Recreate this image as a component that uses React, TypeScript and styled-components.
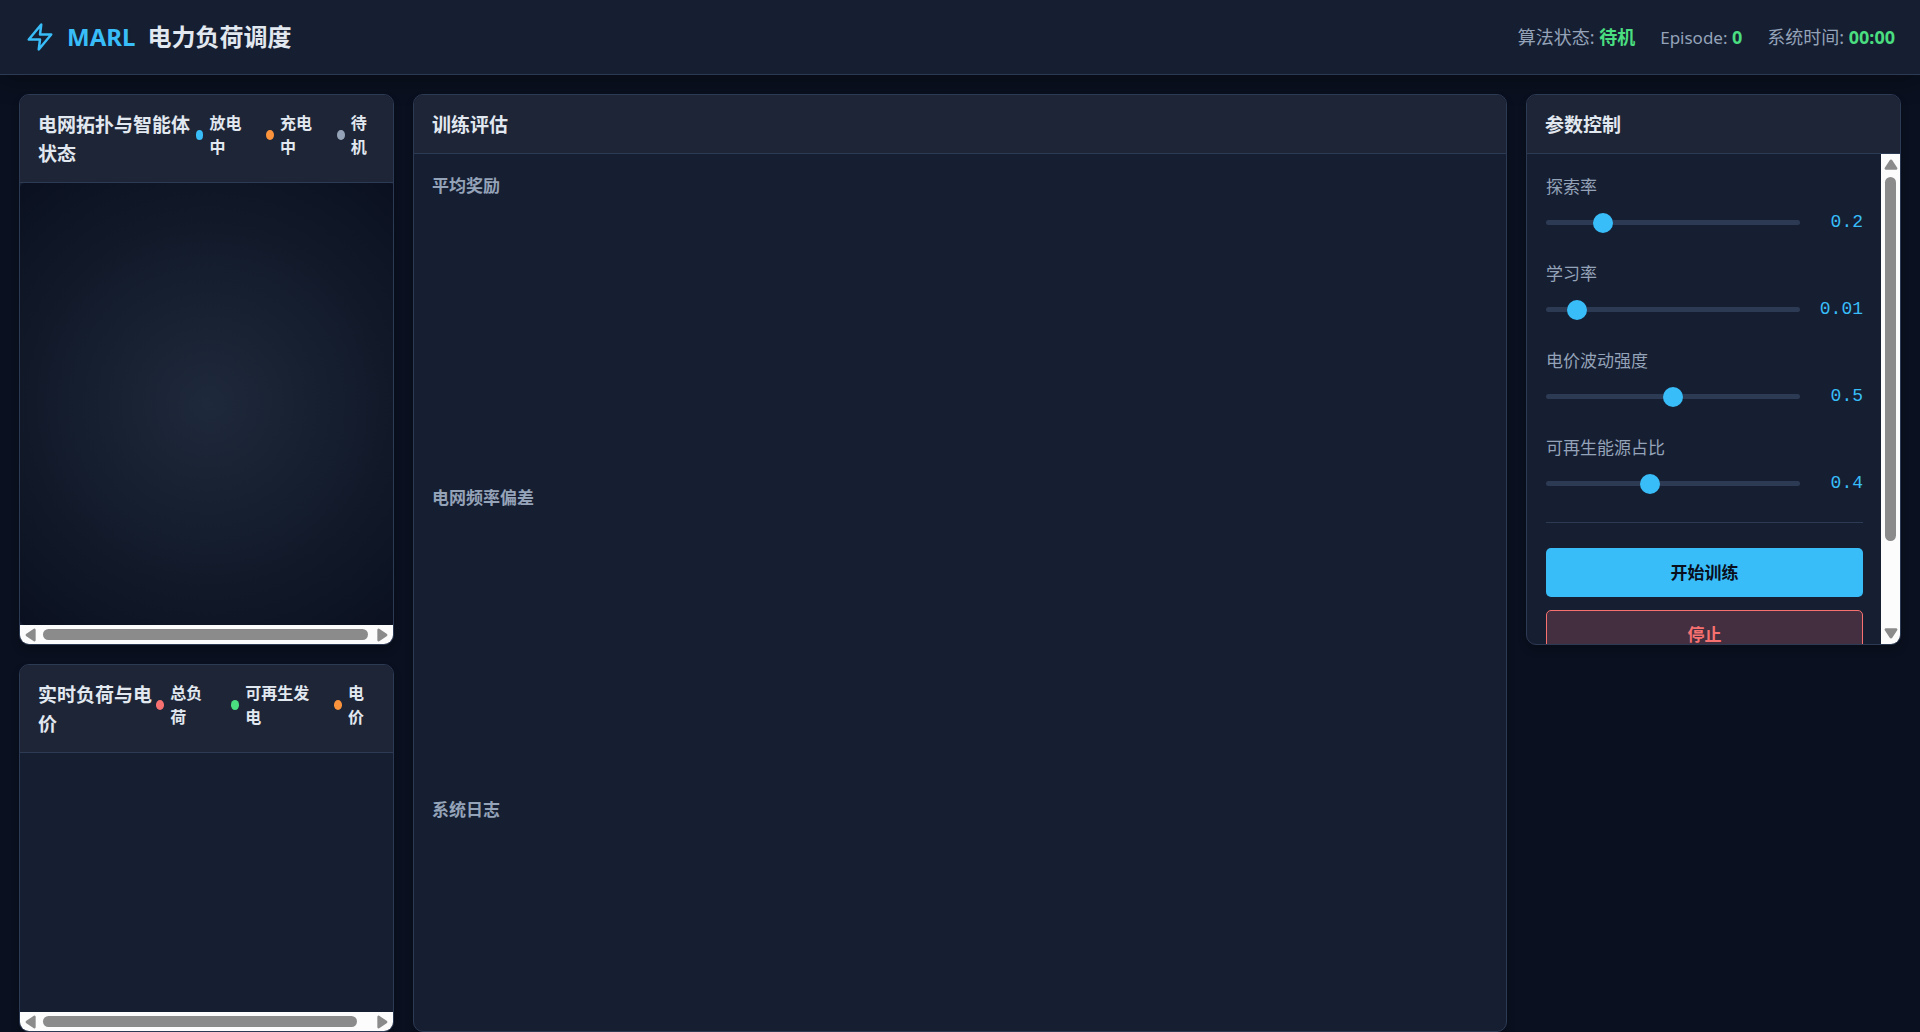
import React, { useEffect, useRef, useState } from 'react';
import styled, { createGlobalStyle } from 'styled-components';

const c = {
  bg: '#0a101f',
  panel: '#161e32',
  head: '#1d2536',
  border: '#2d3a54',
  text: '#e2e8f0',
  muted: '#94a3b8',
  accent: '#38bdf8',
  green: '#4ade80',
  orange: '#fb923c',
  red: '#f87171',
};

const GlobalStyle = createGlobalStyle`
  * { box-sizing: border-box; }
  body {
    margin: 0;
    background: ${c.bg};
    color: ${c.text};
    font-family: "Noto Sans", "Noto Sans CJK SC", sans-serif;
    font-size: 16px;
    line-height: 24px;
  }
  h1, h2, h3 { margin: 0; }
`;

const Page = styled.div`
  display: flex;
  flex-direction: column;
  height: 100vh;
  overflow: hidden;
`;

const Header = styled.header`
  display: flex;
  align-items: center;
  justify-content: space-between;
  padding: 19px 25px;
  background: ${c.panel};
  border-bottom: 1px solid ${c.border};
  box-shadow: 0 5px 25px rgba(0, 0, 0, 0.3);
`;

const Brand = styled.div`
  display: flex;
  align-items: center;
  gap: 12px;
`;

const Title = styled.h1`
  display: flex;
  gap: 12px;
  font-size: 24px;
  line-height: 36px;
  font-weight: 700;
`;

const Accent = styled.span`
  color: ${c.accent};
`;

const StatusList = styled.div`
  display: flex;
  gap: 25px;
  line-height: 28px;
  color: ${c.muted};
`;

const Status = styled.span<{ $compact?: boolean }>`
  font-size: ${(p) => (p.$compact ? 17 : 18)}px;
`;

const StatusValue = styled.strong`
  font-size: 18px;
  color: ${c.green};
`;

const Main = styled.main`
  flex: 1;
  min-height: 0;
  display: grid;
  grid-template-columns: 375px minmax(0, 1fr) 375px;
  grid-template-rows: minmax(0, 3fr) minmax(0, 2fr);
  gap: 19px;
  padding: 19px 19px 0;
`;

const Panel = styled.section<{ $tall?: boolean }>`
  grid-row: ${(p) => (p.$tall ? 'span 2' : 'auto')};
  display: flex;
  flex-direction: column;
  min-width: 0;
  min-height: 0;
  overflow: hidden;
  background: ${c.panel};
  border: 1px solid ${c.border};
  border-radius: 10px;
  box-shadow: 0 5px 8px rgba(0, 0, 0, 0.2);
`;

const PanelHead = styled.div`
  display: flex;
  align-items: flex-start;
  justify-content: space-between;
  padding: 16px 18px 13px;
  background: ${c.head};
  border-bottom: 1px solid ${c.border};
`;

const PanelTitle = styled.h2`
  font-size: 19px;
  line-height: 29px;
  font-weight: 600;
`;

const Legend = styled.div`
  display: flex;
  gap: 20px;
  font-weight: 600;
`;

const LegendItem = styled.span`
  display: flex;
  align-items: center;
  gap: 6px;
`;

const Dot = styled.i<{ $color: string }>`
  width: 10px;
  height: 10px;
  border-radius: 50%;
  background: ${(p) => p.$color};
`;

const Scroller = styled.div<{ $vertical?: boolean }>`
  flex: 1;
  min-height: 0;
  display: flex;
  flex-direction: ${(p) => (p.$vertical ? 'row' : 'column')};
`;

const Viewport = styled.div`
  flex: 1;
  min-width: 0;
  min-height: 0;
  overflow: auto;
  scrollbar-width: none;
`;

const Canvas = styled.div<{ $extra: number; $glow?: boolean }>`
  width: calc(100% + ${(p) => p.$extra}px);
  height: 100%;
  border-radius: 5px;
  background: ${(p) => (p.$glow ? 'radial-gradient(circle at center, #1e293b 0%, #0a101f 100%)' : 'transparent')};
`;

const Bar = styled.div<{ $vertical?: boolean }>`
  flex: 0 0 19px;
  display: flex;
  flex-direction: ${(p) => (p.$vertical ? 'column' : 'row')};
  align-items: center;
  padding: ${(p) => (p.$vertical ? '4px 0' : '0 4px')};
  gap: 5px;
  background: #fcfcfc;
`;

const Track = styled.div<{ $vertical?: boolean }>`
  flex: 1;
  align-self: stretch;
  display: flex;
  flex-direction: ${(p) => (p.$vertical ? 'column' : 'row')};
  padding: ${(p) => (p.$vertical ? '0 4px' : '4px 0')};
`;

const Thumb = styled.div`
  border-radius: 6px;
  background: #8b8b8b;
`;

const arrows = {
  left: 'M10 1.5v9a1 1 0 0 1-1.6.8L2 7.1a1.3 1.3 0 0 1 0-2.2L8.4.7A1 1 0 0 1 10 1.5z',
  right: 'M2 1.5v9a1 1 0 0 0 1.6.8L10 7.1a1.3 1.3 0 0 0 0-2.2L3.6.7A1 1 0 0 0 2 1.5z',
  up: 'M1.5 10h9a1 1 0 0 0 .8-1.6L7.1 2a1.3 1.3 0 0 0-2.2 0L.7 8.4A1 1 0 0 0 1.5 10z',
  down: 'M1.5 2h9a1 1 0 0 1 .8 1.6L7.1 10a1.3 1.3 0 0 1-2.2 0L.7 3.6A1 1 0 0 1 1.5 2z',
};

function Arrow({ dir }: { dir: keyof typeof arrows }) {
  return (
    <svg width="14" height="14" viewBox="0 0 12 12" aria-hidden="true">
      <path d={arrows[dir]} fill="#8b8b8b" />
    </svg>
  );
}

function ScrollArea({ vertical, children }: { vertical?: boolean; children: React.ReactNode }) {
  const view = useRef<HTMLDivElement>(null);
  const [thumb, setThumb] = useState({ start: 0, size: 100 });

  const measure = () => {
    const el = view.current;
    if (!el) return;
    const total = vertical ? el.scrollHeight : el.scrollWidth;
    const shown = vertical ? el.clientHeight : el.clientWidth;
    const offset = vertical ? el.scrollTop : el.scrollLeft;
    setThumb({ start: (offset / total) * 100, size: (shown / total) * 100 });
  };

  useEffect(() => {
    measure();
    window.addEventListener('resize', measure);
    return () => window.removeEventListener('resize', measure);
  }, []);

  return (
    <Scroller $vertical={vertical}>
      <Viewport ref={view} onScroll={measure}>{children}</Viewport>
      <Bar $vertical={vertical}>
        <Arrow dir={vertical ? 'up' : 'left'} />
        <Track $vertical={vertical}>
          <div style={{ flex: `0 0 ${thumb.start}%` }} />
          <Thumb style={{ flex: `0 0 ${thumb.size}%` }} />
        </Track>
        <Arrow dir={vertical ? 'down' : 'right'} />
      </Bar>
    </Scroller>
  );
}

const Charts = styled.div`
  flex: 1;
  min-height: 0;
  overflow: hidden;
  display: grid;
  grid-auto-rows: 293px;
  gap: 19px;
  padding: 19px 18px;
`;

const ChartTitle = styled.h3`
  font-size: 17px;
  line-height: 26px;
  font-weight: 600;
  color: ${c.muted};
`;

const Form = styled.form`
  padding: 20px 18px 94px 19px;
`;

const Field = styled.div`
  display: grid;
  gap: 9px;
  margin-bottom: 25px;
`;

const FieldLabel = styled.label`
  font-size: 17px;
  line-height: 26px;
  color: ${c.muted};
`;

const FieldRow = styled.div`
  display: flex;
  align-items: center;
  gap: 13px;
`;

const Range = styled.input`
  appearance: none;
  flex: 1;
  min-width: 0;
  height: 5px;
  margin: 0;
  border-radius: 3px;
  background: ${c.border};
  &::-webkit-slider-thumb {
    appearance: none;
    width: 20px;
    height: 20px;
    border-radius: 50%;
    background: ${c.accent};
  }
`;

const Value = styled.output`
  width: 50px;
  text-align: right;
  font-family: "Liberation Mono", monospace;
  font-size: 18px;
  line-height: 27px;
  color: ${c.accent};
`;

const Actions = styled.div`
  display: grid;
  gap: 13px;
  padding-top: 25px;
  border-top: 1px solid ${c.border};
`;

const Button = styled.button<{ $danger?: boolean }>`
  height: 49px;
  border: ${(p) => (p.$danger ? `1px solid ${c.red}` : '0')};
  border-radius: 5px;
  background: ${(p) => (p.$danger ? 'rgba(248, 113, 113, 0.2)' : c.accent)};
  color: ${(p) => (p.$danger ? c.red : '#0a0f1d')};
  font-family: inherit;
  font-size: 17px;
  line-height: 26px;
  font-weight: 600;
`;

const fields = [
  { id: 'epsilon', label: '探索率', min: 0, max: 1, step: 0.01, value: 0.2 },
  { id: 'alpha', label: '学习率', min: 0.001, max: 0.1, step: 0.001, value: 0.01 },
  { id: 'volatility', label: '电价波动强度', min: 0, max: 1, step: 0.1, value: 0.5 },
  { id: 'renewable', label: '可再生能源占比', min: 0, max: 1, step: 0.1, value: 0.4 },
];

function Slider({ field }: { field: (typeof fields)[number] }) {
  const [value, setValue] = useState(field.value);
  return (
    <Field>
      <FieldLabel htmlFor={field.id}>{field.label}</FieldLabel>
      <FieldRow>
        <Range
          id={field.id}
          type="range"
          min={field.min}
          max={field.max}
          step={field.step}
          value={value}
          onChange={(e) => setValue(Number(e.target.value))}
        />
        <Value htmlFor={field.id}>{value}</Value>
      </FieldRow>
    </Field>
  );
}

function LegendList({ items }: { items: [string, string][] }) {
  return (
    <Legend>
      {items.map(([label, color]) => (
        <LegendItem key={label}>
          <Dot $color={color} />
          {label}
        </LegendItem>
      ))}
    </Legend>
  );
}

export default function App() {
  return (
    <Page>
      <GlobalStyle />
      <Header>
        <Brand>
          <svg width="30" height="30" viewBox="0 0 24 24" fill="none" stroke={c.accent} strokeWidth="2" strokeLinecap="round" strokeLinejoin="round" aria-hidden="true">
            <path d="M13 2L3 14h9l-1 8 10-12h-9l1-8z" />
          </svg>
          <Title>
            <Accent>MARL</Accent>
            <span>电力负荷调度</span>
          </Title>
        </Brand>
        <StatusList>
          <Status>算法状态: <StatusValue>待机</StatusValue></Status>
          <Status $compact>Episode: <StatusValue>0</StatusValue></Status>
          <Status>系统时间: <StatusValue>00:00</StatusValue></Status>
        </StatusList>
      </Header>
      <Main>
        <Panel>
          <PanelHead>
            <PanelTitle>电网拓扑与智能体状态</PanelTitle>
            <LegendList items={[['放电中', c.accent], ['充电中', c.orange], ['待机', c.muted]]} />
          </PanelHead>
          <ScrollArea>
            <Canvas $extra={2} $glow />
          </ScrollArea>
        </Panel>
        <Panel $tall>
          <PanelHead>
            <PanelTitle>训练评估</PanelTitle>
          </PanelHead>
          <Charts>
            <ChartTitle>平均奖励</ChartTitle>
            <ChartTitle>电网频率偏差</ChartTitle>
            <ChartTitle>系统日志</ChartTitle>
          </Charts>
        </Panel>
        <Panel>
          <PanelHead>
            <PanelTitle>参数控制</PanelTitle>
          </PanelHead>
          <ScrollArea vertical>
            <Form onSubmit={(e) => e.preventDefault()}>
              {fields.map((f) => <Slider key={f.id} field={f} />)}
              <Actions>
                <Button type="submit">开始训练</Button>
                <Button type="button" $danger>停止</Button>
              </Actions>
            </Form>
          </ScrollArea>
        </Panel>
        <Panel>
          <PanelHead>
            <PanelTitle>实时负荷与电价</PanelTitle>
            <LegendList items={[['总负荷', c.red], ['可再生发电', c.green], ['电价', c.orange]]} />
          </PanelHead>
          <ScrollArea>
            <Canvas $extra={15} />
          </ScrollArea>
        </Panel>
      </Main>
    </Page>
  );
}
